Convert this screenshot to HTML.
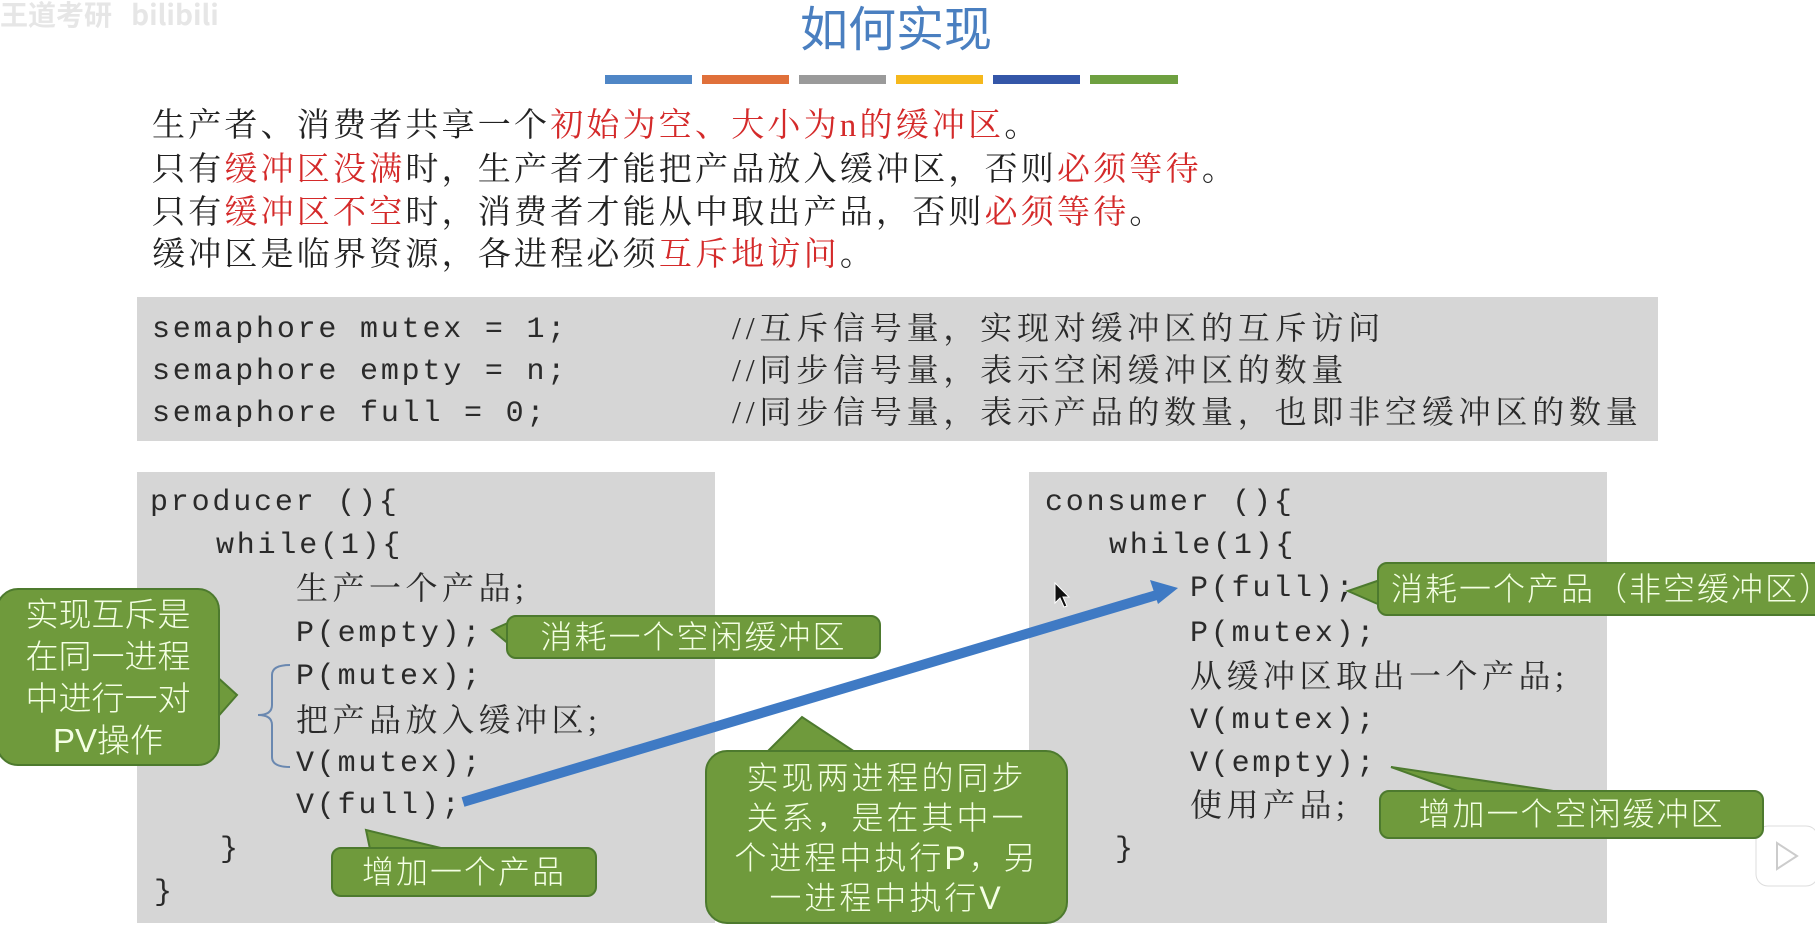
<!DOCTYPE html>
<html><head><meta charset="utf-8"><style>
*{margin:0;padding:0;box-sizing:border-box}
body{width:1815px;height:944px;background:#fff;position:relative;overflow:hidden;font-family:"Liberation Serif","Noto Serif CJK SC",serif;color:#222}
.a{position:absolute;white-space:nowrap}
.t{font-size:33px;line-height:43px;left:152px;letter-spacing:3.2px}
.r{color:#d42a2a}
.gray{position:absolute;background:#d6d6d6}
.m{font-family:"Liberation Mono","Noto Sans CJK SC",monospace;font-size:30px;letter-spacing:2.8px;color:#2a2a2a}
.c{font-family:"Liberation Serif","Noto Serif CJK SC",serif;font-size:32px;color:#2a2a2a;letter-spacing:4.5px}
.g{position:absolute;background:#6f9a3c;border:2px solid #4d7a2e;border-radius:10px;color:#f4ffe4;font-family:"Liberation Sans","Noto Sans CJK SC",sans-serif;font-size:32px;text-align:center;letter-spacing:2px;font-weight:300}
</style></head><body>
<div class="a" style="left:0;top:-6px;font-size:28px;color:#e6e6e6;font-family:'Noto Sans CJK SC',sans-serif;font-weight:bold">王道考研 &nbsp; bilibili</div>
<div class="a" style="left:800px;top:-10px;font-size:48px;color:#4a7fc0;font-family:'Noto Sans CJK SC',sans-serif">如何实现</div>
<div class="a" style="left:605px;top:75px;width:87px;height:9px;background:#4f86c6"></div>
<div class="a" style="left:702px;top:75px;width:87px;height:9px;background:#e0703a"></div>
<div class="a" style="left:799px;top:75px;width:87px;height:9px;background:#9a9a9a"></div>
<div class="a" style="left:896px;top:75px;width:87px;height:9px;background:#f5b81c"></div>
<div class="a" style="left:993px;top:75px;width:87px;height:9px;background:#3456a8"></div>
<div class="a" style="left:1090px;top:75px;width:88px;height:9px;background:#6ea040"></div>

<div class="a t" style="top:105px">生产者、消费者共享一个<span class="r">初始为空、大小为n的缓冲区</span>。</div>
<div class="a t" style="top:149px">只有<span class="r">缓冲区没满</span>时，生产者才能把产品放入缓冲区，否则<span class="r">必须等待</span>。</div>
<div class="a t" style="top:192px">只有<span class="r">缓冲区不空</span>时，消费者才能从中取出产品，否则<span class="r">必须等待</span>。</div>
<div class="a t" style="top:234px">缓冲区是临界资源，各进程必须<span class="r">互斥地访问</span>。</div>

<div class="gray" style="left:137px;top:297px;width:1521px;height:144px"></div>
<div class="a m" style="left:152px;top:313px">semaphore mutex = 1;</div>
<div class="a m" style="left:152px;top:355px">semaphore empty = n;</div>
<div class="a m" style="left:152px;top:397px">semaphore full = 0;</div>
<div class="a c" style="left:732px;top:303px;letter-spacing:4.8px">//互斥信号量，实现对缓冲区的互斥访问</div>
<div class="a c" style="left:732px;top:345px;letter-spacing:4.8px">//同步信号量，表示空闲缓冲区的数量</div>
<div class="a c" style="left:732px;top:387px;letter-spacing:4.8px">//同步信号量，表示产品的数量，也即非空缓冲区的数量</div>

<div class="gray" style="left:137px;top:472px;width:578px;height:451px"></div>
<div class="gray" style="left:1029px;top:472px;width:578px;height:451px"></div>

<div class="a m" style="left:150px;top:486px">producer ()&#123;</div>
<div class="a m" style="left:216px;top:529px">while(1)&#123;</div>
<div class="a c" style="left:296px;top:563px">生产一个产品;</div>
<div class="a m" style="left:296px;top:617px">P(empty);</div>
<div class="a m" style="left:296px;top:660px">P(mutex);</div>
<div class="a c" style="left:296px;top:695px">把产品放入缓冲区;</div>
<div class="a m" style="left:296px;top:747px">V(mutex);</div>
<div class="a m" style="left:296px;top:789px">V(full);</div>
<div class="a m" style="left:220px;top:833px">}</div>
<div class="a m" style="left:154px;top:876px">}</div>

<div class="a m" style="left:1045px;top:486px">consumer ()&#123;</div>
<div class="a m" style="left:1109px;top:529px">while(1)&#123;</div>
<div class="a m" style="left:1190px;top:572px">P(full);</div>
<div class="a m" style="left:1190px;top:617px">P(mutex);</div>
<div class="a c" style="left:1190px;top:651px">从缓冲区取出一个产品;</div>
<div class="a m" style="left:1190px;top:704px">V(mutex);</div>
<div class="a m" style="left:1190px;top:747px">V(empty);</div>
<div class="a c" style="left:1190px;top:780px">使用产品;</div>
<div class="a m" style="left:1115px;top:833px">}</div>

<svg class="a" style="left:0;top:0" width="1815" height="944">
<path d="M290 665 Q272 665 272 675 L272 705 Q272 715 258 715 Q272 715 272 725 L272 757 Q272 767 290 767" fill="none" stroke="#6a88b0" stroke-width="2"/>
<g fill="#6f9a3c" stroke="#4d7a2e" stroke-width="2">
<polygon points="215,675 237,695 215,720"/>
<polygon points="510,622 492,630 510,645"/>
<polygon points="370,849 366,830 445,849"/>
<polygon points="767,752 802,717 855,752"/>
<polygon points="1380,580 1348,591 1380,605"/>
<polygon points="1460,792 1391,767 1560,792"/>
</g>
<line x1="463" y1="802" x2="1160" y2="594" stroke="#3f7ac4" stroke-width="10"/>
<polygon points="1178,588 1150,580 1158,604" fill="#3f7ac4"/>
<path d="M1055 583 L1055 603 L1060 598 L1064 607 L1067 606 L1063 597 L1069 597 Z" fill="#111" stroke="#fff" stroke-width="1"/>
<rect x="1756" y="826" width="62" height="60" rx="12" fill="#fff" stroke="#ddd"/>
<polygon points="1777,843 1777,869 1797,856" fill="#fff" stroke="#ccc" stroke-width="2"/>
</svg>

<div class="g" style="left:-4px;top:588px;width:224px;height:178px;line-height:42px;padding-top:4px;font-size:33px;border-radius:22px;letter-spacing:0">实现互斥是<br>在同一进程<br>中进行一对<br>PV操作</div>
<div class="g" style="left:506px;top:615px;width:375px;height:44px;line-height:40px">消耗一个空闲缓冲区</div>
<div class="g" style="left:331px;top:847px;width:266px;height:50px;line-height:46px">增加一个产品</div>
<div class="g" style="left:705px;top:750px;width:363px;height:174px;line-height:40px;padding-top:6px;border-radius:22px;letter-spacing:3px">实现两进程的同步<br>关系，是在其中一<br>个进程中执行P，另<br>一进程中执行V</div>
<div class="g" style="left:1377px;top:562px;width:460px;height:54px;line-height:50px;text-align:left;padding-left:12px">消耗一个产品（非空缓冲区）</div>
<div class="g" style="left:1379px;top:790px;width:385px;height:49px;line-height:45px">增加一个空闲缓冲区</div>
</body></html>
